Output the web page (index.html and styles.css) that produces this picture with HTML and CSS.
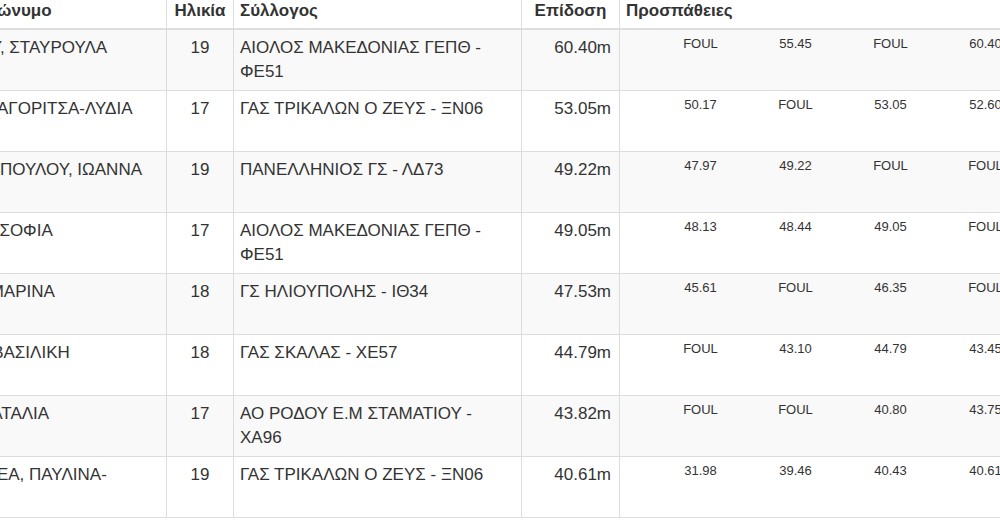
FILE: index.html
```html
<!DOCTYPE html>
<html lang="el">
<head>
<meta charset="utf-8">
<title>Αποτελέσματα</title>
<link rel="stylesheet" href="styles.css">
</head>
<body>
<div class="wrap">
<table class="results">
  <colgroup>
    <col class="c-name">
    <col class="c-age">
    <col class="c-club">
    <col class="c-perf">
    <col class="c-att">
  </colgroup>
  <thead>
    <tr>
      <th class="name">Ονοματεπώνυμο</th>
      <th class="age">Ηλικία</th>
      <th class="club">Σύλλογος</th>
      <th class="perf">Επίδοση</th>
      <th class="att">Προσπάθειες</th>
    </tr>
  </thead>
  <tbody>
    <tr>
      <td class="name">ΝΙΚΟΛΑΟΥ, ΣΤΑΥΡΟΥΛΑ</td>
      <td class="age">19</td>
      <td class="club">ΑΙΟΛΟΣ ΜΑΚΕΔΟΝΙΑΣ ΓΕΠΘ - ΦΕ51</td>
      <td class="perf">60.40m</td>
      <td class="att"><div class="tries"><span>FOUL</span><span>55.45</span><span>FOUL</span><span>60.40</span><span>58.91</span><span>FOUL</span></div></td>
    </tr>
    <tr>
      <td class="name">ΓΚΑΤΣΟΥ, ΑΓΟΡΙΤΣΑ-ΛΥΔΙΑ</td>
      <td class="age">17</td>
      <td class="club">ΓΑΣ ΤΡΙΚΑΛΩΝ Ο ΖΕΥΣ - ΞΝ06</td>
      <td class="perf">53.05m</td>
      <td class="att"><div class="tries"><span>50.17</span><span>FOUL</span><span>53.05</span><span>52.60</span><span>FOUL</span><span>51.84</span></div></td>
    </tr>
    <tr>
      <td class="name">ΔΗΜΗΤΡΟΠΟΥΛΟΥ, ΙΩΑΝΝΑ</td>
      <td class="age">19</td>
      <td class="club">ΠΑΝΕΛΛΗΝΙΟΣ ΓΣ - ΛΔ73</td>
      <td class="perf">49.22m</td>
      <td class="att"><div class="tries"><span>47.97</span><span>49.22</span><span>FOUL</span><span>FOUL</span><span>48.70</span><span>FOUL</span></div></td>
    </tr>
    <tr>
      <td class="name">ΚΑΡΑΤΖΑ, ΣΟΦΙΑ</td>
      <td class="age">17</td>
      <td class="club">ΑΙΟΛΟΣ ΜΑΚΕΔΟΝΙΑΣ ΓΕΠΘ - ΦΕ51</td>
      <td class="perf">49.05m</td>
      <td class="att"><div class="tries"><span>48.13</span><span>48.44</span><span>49.05</span><span>FOUL</span><span>47.86</span><span>48.02</span></div></td>
    </tr>
    <tr>
      <td class="name">ΜΙΧΑΛΗ, ΜΑΡΙΝΑ</td>
      <td class="age">18</td>
      <td class="club">ΓΣ ΗΛΙΟΥΠΟΛΗΣ - ΙΘ34</td>
      <td class="perf">47.53m</td>
      <td class="att"><div class="tries"><span>45.61</span><span>FOUL</span><span>46.35</span><span>FOUL</span><span>47.53</span><span>FOUL</span></div></td>
    </tr>
    <tr>
      <td class="name">ΚΑΡΑΛΗ, ΒΑΣΙΛΙΚΗ</td>
      <td class="age">18</td>
      <td class="club">ΓΑΣ ΣΚΑΛΑΣ - ΧΕ57</td>
      <td class="perf">44.79m</td>
      <td class="att"><div class="tries"><span>FOUL</span><span>43.10</span><span>44.79</span><span>43.45</span><span>FOUL</span><span>42.88</span></div></td>
    </tr>
    <tr>
      <td class="name">ΧΑΤΖΗ, ΝΑΤΑΛΙΑ</td>
      <td class="age">17</td>
      <td class="club">ΑΟ ΡΟΔΟΥ Ε.Μ ΣΤΑΜΑΤΙΟΥ - ΧΑ96</td>
      <td class="perf">43.82m</td>
      <td class="att"><div class="tries"><span>FOUL</span><span>FOUL</span><span>40.80</span><span>43.75</span><span>43.82</span><span>FOUL</span></div></td>
    </tr>
    <tr>
      <td class="name">ΛΑΜΠΡΑΚΕΑ, ΠΑΥΛΙΝΑ-ΕΙΡΗΝΗ</td>
      <td class="age">19</td>
      <td class="club">ΓΑΣ ΤΡΙΚΑΛΩΝ Ο ΖΕΥΣ - ΞΝ06</td>
      <td class="perf">40.61m</td>
      <td class="att"><div class="tries"><span>31.98</span><span>39.46</span><span>40.43</span><span>40.61</span><span>FOUL</span><span>39.90</span></div></td>
    </tr>
  </tbody>
</table>
</div>
</body>
</html>
```

FILE: styles.css
```css
html, body {
  margin: 0;
  padding: 0;
  background: #ffffff;
}

body {
  font-family: "Liberation Sans", Arial, "DejaVu Sans", sans-serif;
  font-size: 17px;
  line-height: 24px;
  color: #333333;
}

.wrap {
  width: 1000px;
  height: 520px;
  overflow: hidden;
}

.results {
  border-collapse: collapse;
  table-layout: fixed;
  width: 1331px;
  margin: -8px 0 0 -92px;
}

.c-name { width: 258px; }
.c-age { width: 67px; }
.c-club { width: 288px; }
.c-perf { width: 98px; }
.c-att { width: 620px; }

.results th,
.results td {
  border: 1px solid #dddddd;
  padding: 6px;
  vertical-align: top;
  text-align: left;
}

.results th {
  font-weight: bold;
  vertical-align: bottom;
  padding-bottom: 5px;
  border-bottom-width: 2px;
}

.results tbody td {
  height: 48px;
}

.results tbody tr:nth-child(odd) td {
  background: #f9f9f9;
}

.results .age {
  text-align: center;
}

.results th.perf {
  text-align: center;
}

.results td.perf {
  text-align: right;
  padding-right: 8px;
}

.tries {
  display: grid;
  grid-template-columns: repeat(6, 95px);
  justify-items: center;
  margin-left: 27px;
  margin-top: 1px;
  font-size: 13px;
  line-height: 14px;
}
```
